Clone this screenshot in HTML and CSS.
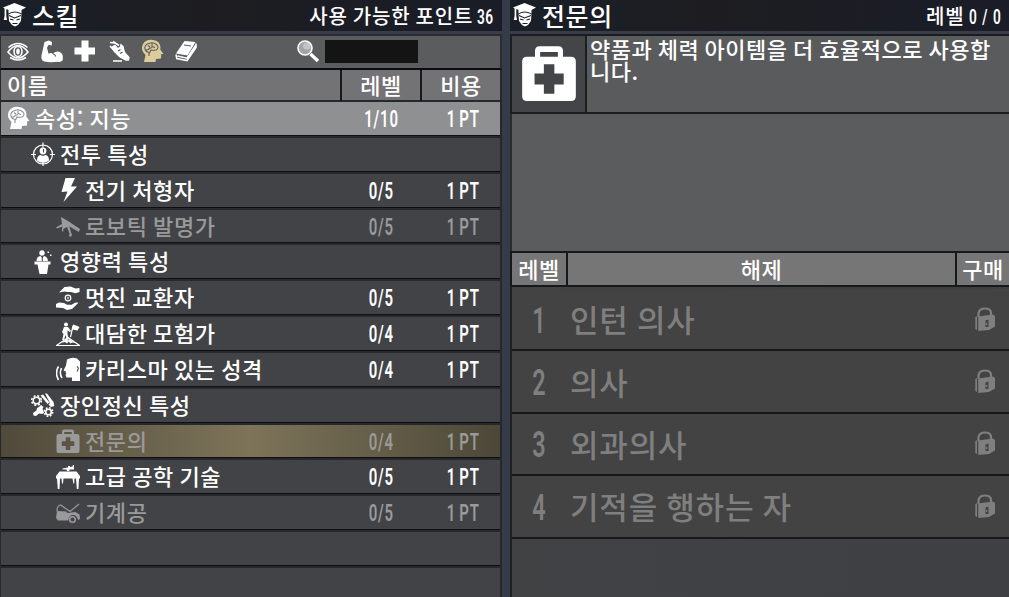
FILE: index.html
```
<!DOCTYPE html>
<html lang="ko">
<head>
    <meta charset="UTF-8">
    <meta name="viewport" content="width=device-width, initial-scale=1.0">
    <title>스킬</title>
    <link rel="stylesheet" href="styles.css">
</head>
<body>
    <!-- Icon sprites -->
    <svg class="sprites" width="0" height="0">
        <symbol id="grad" viewBox="0 0 24 24">
            <path d="M0 4.5 11.500 0 23 4.500 18.500 7v3.500Q11.500 6.500 5.500 10.500V7L3.300 6V13l.7 4H.8l.8-4V5.500z"/>
            <path d="M5.500 11.500q6-4 13 0l-.6 6.500-2.900 4-3 1.500-3-1.500-3-4z"/>
            <path class="cut" d="M6 12.500l5.500 2.500 6.500-2.500M7 16l3.500 1M13.500 17l3.500-1M9.500 20.500h5"/>
        </symbol>
        <symbol id="eye" viewBox="0 0 24 24">
            <path class="line" d="M2 13q10-13 20 0-10 12-20 0z"/>
            <path class="line" d="M2.500 8.500q9.500-8 19 0M4 18.500q8 5 16 0" stroke-width="1.200"/>
            <ellipse class="line" cx="12" cy="12.500" rx="4" ry="5"/>
            <ellipse cx="12" cy="12.500" rx="1.800" ry="3"/>
        </symbol>
        <symbol id="arm" viewBox="0 0 24 24">
            <path d="M4.500 3 9 1.500l3 1.500-.3 3.500-3-.7-1.700 3 1.500 6q2.500-1.500 4.500.2 1.500-2.800 5-2.500 4 .5 4.800 4.500v4q-2 2.500-5 1.800-8 1-13.500-.3-3.500-1-2.800-6z"/>
            <path class="cut" d="M13.200 15q2 .5 2.500 2.500"/>
        </symbol>
        <symbol id="plus" viewBox="0 0 24 24">
            <path d="M8.500 1.500h7v7h6.500v7h-6.500v7h-7v-7H1.500v-7h7z"/>
        </symbol>
        <symbol id="shoe" viewBox="0 0 24 24">
            <path d="M4 8 8 5.500l3 3.500 2-1.500.5-3 3 2.500 1.500 6 4.500 5v2.500l-4.500.5-5.500-3-5.500-5z"/>
            <path class="line" d="M3 3.500l5 .5M3 7l5 5.500 5 5 6 3.500h3M6 2.500l6 4M6 22h9" stroke-width="1.200"/>
            <path class="cut" d="M11 12l2.500-1.500M13 14.500l2.500-1.500"/>
        </symbol>
        <symbol id="brain" viewBox="0 0 24 24">
            <path d="M4 23l1.500-7Q0 11 3 5 6.500 0 13 1q7 1 7.500 7l-.2 2.500L23.500 15h-2.200l-.3 4.500-5 .5-.5 3z"/>
            <path class="cut" d="M5 10.500Q4 5.500 9 4.500q4-2 8 1.500 2.500 3-1 5-3 .5-5 0l-1.500 3M5 10.500q3 1.500 4-1l3-1M8 6.500l2 1.500M12 4.500v3l3 1M5 10.500q1 2.500 4 3V17" stroke-width="1.300"/>
        </symbol>
        <symbol id="book" viewBox="0 0 24 24">
            <path d="M10.500 2 21.500 3 13.500 16.500 2 14.500z"/>
            <path class="line" d="M2 15.500l.8 4 10.200 2L22 8.500V4.500M3.500 17l9.500 2.200L21.500 6.500" stroke-width="1.300"/>
            <path class="cut" d="M10 6l7 1"/>
        </symbol>
        <symbol id="aim" viewBox="0 0 24 24">
            <circle class="line thin" cx="12" cy="12.500" r="9.500"/>
            <path class="line thin" d="M12 .5v5M12 19.500v5M0 12.500h5M19 12.500h5"/>
            <circle cx="12" cy="9" r="3.400"/>
            <path d="M6 18.500q0-5 3.500-5.500l2.500 1 2.500-1q3.500.5 3.500 5.500-6 4.500-12 0z"/>
            <path class="cut" d="M12.500 7v3.500"/>
        </symbol>
        <symbol id="bolt" viewBox="0 0 24 24">
            <path d="M9.500 0h9.500l-4 8.500h6L7.500 24l4-10.500-6 .5z"/>
        </symbol>
        <symbol id="turret" viewBox="0 0 24 24">
            <path d="M5 3l7 4 12 8-1.200 3L13.500 12.500l1.500 6 1 2-1 2.500-2-1 .5-2.500L11 13l-3.500 2-.5 3.500L5.800 16l.7-3.500L1 14.500l-1-1L6 10z"/>
        </symbol>
        <symbol id="podium" viewBox="0 0 24 24">
            <circle cx="11" cy="3" r="2.700"/>
            <path d="M5.500 11q0-4.500 4-5l1.800 2 1.700-2q3.500.5 4 5zM3.500 11.500h16v3h-2L16 24H8.500L6.500 14.500h-3z"/>
            <path class="cut" d="M11.300 7v4"/>
            <path d="M16.500 1.500H18V3h-1.500zM19 4.500h1.500V6H19z"/>
        </symbol>
        <symbol id="trade" viewBox="0 0 24 24">
            <path d="M3 6.500 8.500 1l6-.5 5 2 4-.5v4l-4 1.300-4.500-1.300-3.500 0-3-.5zM0 18l3-1.500 5 .5 3 1.800h4.500l4-2.300 3 .3-6.500 6.200-5 1-4-2-7-.5z"/>
            <circle class="line thin" cx="12" cy="12" r="2.800"/>
            <path d="M11.400 10.800h1.200v2.400h-1.200z"/>
        </symbol>
        <symbol id="climber" viewBox="0 0 24 24">
            <circle cx="10" cy="2.500" r="2"/>
            <path d="M8 5h4l3 4-1 1-2.500-1.500v4l1.500 5h-2L9.500 13 8 18H6.200l1.300-6L6 10z"/>
            <path class="line thin" d="M14.500 15 17 4"/>
            <path d="M17 2.500l3 1 3.500 1.500-2 3.500-5.500-1z"/>
            <path class="line thin" d="M.5 23.500 12 15.500l11.500 8z"/>
            <path d="M5 21l6-4.500 1 2 1.500-1.500 5.500 4-3-.5-1.500 1-2-2-1.500 2-2-1.500z"/>
        </symbol>
        <symbol id="voice" viewBox="0 0 24 24">
            <path d="M11 2.500Q16-.5 21 1.500l3 3V24h-8v-3.500h-5.500l-1-2.500 1-1.500-1-.5.5-1.500-2.500-1L10 8.500z"/>
            <path class="line" d="M5.500 11q-2.500 5.500.5 10M2.500 9.500Q-1.500 16 2.500 23"/>
            <path class="cut" d="M21 9.500q2.500 1.500 0 5"/>
        </symbol>
        <symbol id="craft" viewBox="0 0 24 24">
            <circle class="line" cx="5.500" cy="7.500" r="3.300"/>
            <circle class="line" cx="5.500" cy="7.500" r="4.800" stroke-dasharray="2 1.800"/>
            <circle class="line" cx="17.500" cy="19" r="2.800"/>
            <circle class="line" cx="17.500" cy="19" r="4.200" stroke-dasharray="1.800 1.500"/>
            <path d="M9.500 2.500 12 1.500l6.500 8-2 1.500zM14 .5h2L22.500 9l.8 4-3.300 1-2.500-2.500L19 10zM10 12l2.500 2-1 1.500 1.500 4-1.500 1.500-3.500-.5-3 2.500-2.500-.5-.5-2.500 3.500-2.500.5-2.500 2-1z"/>
        </symbol>
        <symbol id="medkit" viewBox="0 0 24 24">
            <path fill-rule="evenodd" d="M2.500 5H6V2.500Q6 .5 8 .5h8q2 0 2 2V5h3.500q2 0 2 2v15q0 2-2 2h-19q-2 0-2-2V7q0-2 2-2zM8.200 5h7.600V3H8.200zM9.800 8.200v4H5.800v4.700h4v4h4.500v-4h4v-4.700h-4v-4z"/>
        </symbol>
        <symbol id="bench" viewBox="0 0 24 24">
            <path d="M3.500 6.500h17L24 11v2.500h-1l-.5 10.500h-1.700L20 13.500h-1.500l-.3 5h-.9l-.8-5h-9l-.5 5H6l-.5-5H4L3.500 24H1.800L1 13.500H0V11zM6.500 3.500 12 2.500V1h2v1l2.500-.5L17 0h1v4.500h-4L13 6h-2L10.500 4.500h-4z"/>
        </symbol>
        <symbol id="car" viewBox="0 0 24 24">
            <path d="M1 10l9 .5 1.500 1.500 8-1 4 2.500.5 4.500-2 1q-1-5-5-5t-4.800 5.500H2L0 17z"/>
            <path class="line thin" d="M1 10.500q0-6 3.500-6.500l9.500 6.500L23 3"/>
            <circle class="line" cx="16.500" cy="18.500" r="2.800"/>
        </symbol>
        <symbol id="glass" viewBox="0 0 24 24">
            <path class="line handle" d="M14.500 15 22 22"/>
            <circle cx="9" cy="9" r="6.500" fill="#a4a4a4"/>
            <ellipse cx="11" cy="7" rx="4" ry="3.500" fill="#c4c4c4"/>
            <circle class="line" cx="9" cy="9" r="7"/>
        </symbol>
        <symbol id="lock" viewBox="0 0 24 24">
            <path class="line shackle" d="M5.500 10V6Q6.500 1.500 12 1.500T18 5.500V9"/>
            <path d="M5.200 9.500 20 7.500l2 1.500v10.500l-6 3.500-10.800 1zM2.300 10l1.700-.8V23l-1.700-1z"/>
            <path class="hole" d="M12.500 13.500l3-1V20h-3z"/>
            <path d="M13 16h1.300v2H13z"/>
        </symbol>
    </svg>

    <div class="screen">
        <section class="window skills">
            <header class="title-bar">
                <svg class="icon"><use href="#grad"/></svg>
                <h1>스킬</h1>
                <div class="points">사용 가능한 포인트 <span class="num">36</span></div>
            </header>

            <div class="toolbar">
                <svg class="icon"><use href="#eye"/></svg>
                <svg class="icon"><use href="#arm"/></svg>
                <svg class="icon"><use href="#plus"/></svg>
                <svg class="icon"><use href="#shoe"/></svg>
                <svg class="icon active"><use href="#brain"/></svg>
                <svg class="icon"><use href="#book"/></svg>
                <div class="search">
                    <svg class="icon"><use href="#glass"/></svg>
                    <div class="search-input"></div>
                </div>
            </div>

            <div class="row list-head">
                <div class="name">이름</div>
                <div class="level">레벨</div>
                <div class="cost">비용</div>
            </div>

            <div class="list">
                <div class="row attribute">
                    <div class="name"><svg class="icon"><use href="#brain"/></svg>속성: 지능</div>
                    <div class="level"><span class="num">1/10</span></div>
                    <div class="cost"><span class="num">1 PT</span></div>
                </div>
                <div class="row group">
                    <div class="name"><svg class="icon"><use href="#aim"/></svg>전투 특성</div>
                </div>
                <div class="row perk">
                    <div class="name"><svg class="icon"><use href="#bolt"/></svg>전기 처형자</div>
                    <div class="level"><span class="num">0/5</span></div>
                    <div class="cost"><span class="num">1 PT</span></div>
                </div>
                <div class="row perk locked">
                    <div class="name"><svg class="icon"><use href="#turret"/></svg>로보틱 발명가</div>
                    <div class="level"><span class="num">0/5</span></div>
                    <div class="cost"><span class="num">1 PT</span></div>
                </div>
                <div class="row group">
                    <div class="name"><svg class="icon"><use href="#podium"/></svg>영향력 특성</div>
                </div>
                <div class="row perk">
                    <div class="name"><svg class="icon"><use href="#trade"/></svg>멋진 교환자</div>
                    <div class="level"><span class="num">0/5</span></div>
                    <div class="cost"><span class="num">1 PT</span></div>
                </div>
                <div class="row perk">
                    <div class="name"><svg class="icon"><use href="#climber"/></svg>대담한 모험가</div>
                    <div class="level"><span class="num">0/4</span></div>
                    <div class="cost"><span class="num">1 PT</span></div>
                </div>
                <div class="row perk">
                    <div class="name"><svg class="icon"><use href="#voice"/></svg>카리스마 있는 성격</div>
                    <div class="level"><span class="num">0/4</span></div>
                    <div class="cost"><span class="num">1 PT</span></div>
                </div>
                <div class="row group">
                    <div class="name"><svg class="icon"><use href="#craft"/></svg>장인정신 특성</div>
                </div>
                <div class="row perk locked selected">
                    <div class="name"><svg class="icon"><use href="#medkit"/></svg>전문의</div>
                    <div class="level"><span class="num">0/4</span></div>
                    <div class="cost"><span class="num">1 PT</span></div>
                </div>
                <div class="row perk">
                    <div class="name"><svg class="icon"><use href="#bench"/></svg>고급 공학 기술</div>
                    <div class="level"><span class="num">0/5</span></div>
                    <div class="cost"><span class="num">1 PT</span></div>
                </div>
                <div class="row perk locked">
                    <div class="name"><svg class="icon"><use href="#car"/></svg>기계공</div>
                    <div class="level"><span class="num">0/5</span></div>
                    <div class="cost"><span class="num">1 PT</span></div>
                </div>
                <div class="row"></div>
                <div class="row"></div>
            </div>
        </section>

        <section class="window details">
            <header class="title-bar">
                <svg class="icon"><use href="#grad"/></svg>
                <h1>전문의</h1>
                <div class="points">레벨 <span class="num wide">0 / 0</span></div>
            </header>

            <div class="summary">
                <div class="summary-icon"><svg class="icon"><use href="#medkit"/></svg></div>
                <p>약품과 체력 아이템을 더 효율적으로 사용합<br>니다.</p>
            </div>
            <div class="notes"></div>

            <div class="unlock-head">
                <div>레벨</div>
                <div>해제</div>
                <div>구매</div>
            </div>
            <div class="unlocks">
                <div class="unlock">
                    <span class="num">1</span>
                    <span class="unlock-name">인턴 의사</span>
                    <svg class="icon"><use href="#lock"/></svg>
                </div>
                <div class="unlock">
                    <span class="num">2</span>
                    <span class="unlock-name">의사</span>
                    <svg class="icon"><use href="#lock"/></svg>
                </div>
                <div class="unlock">
                    <span class="num">3</span>
                    <span class="unlock-name">외과의사</span>
                    <svg class="icon"><use href="#lock"/></svg>
                </div>
                <div class="unlock">
                    <span class="num">4</span>
                    <span class="unlock-name">기적을 행하는 자</span>
                    <svg class="icon"><use href="#lock"/></svg>
                </div>
            </div>
        </section>
    </div>
</body>
</html>
```

FILE: styles.css
```
* {
    box-sizing: border-box;
}

body {
    margin: 0;
    background: #353b48;
    color: #fff;
    font-family: "Noto Sans CJK KR", sans-serif;
    font-size: 22px;
    font-weight: 500;
    letter-spacing: 0.6px;
    word-spacing: -1.2px;
    line-height: 30px;
    white-space: nowrap;
    overflow: hidden;
}

.sprites {
    display: block;
}

.screen {
    display: flex;
    gap: 8px;
    height: 597px;
    overflow: hidden;
}

.window {
    display: flex;
    flex-direction: column;
    flex: none;
}

.window > * {
    flex-shrink: 0;
}

.skills {
    width: 502px;
}

.details {
    width: 499px;
}

/* Icons */
.icon {
    --cut: #444548;
    flex: none;
    width: 24px;
    height: 24px;
    fill: currentColor;
    overflow: visible;
}

.line {
    fill: none;
    stroke: currentColor;
    stroke-width: 1.6;
}

.thin {
    stroke-width: 1.2;
}

.handle {
    stroke-width: 3.4;
}

.shackle {
    stroke-width: 2.2;
}

.cut {
    fill: none;
    stroke: var(--cut);
    stroke-width: 1.1;
}

.hole {
    fill: #434343;
}

/* Condensed numerals */
.num {
    display: inline-block;
    font-family: Roboto, sans-serif;
    font-size: 23px;
    font-weight: 600;
    letter-spacing: 1.2px;
    word-spacing: -2px;
    transform: scaleX(0.65);
}

/* Title bars */
.title-bar {
    display: flex;
    align-items: center;
    height: 34px;
    padding: 0 8px 2px 3px;
    background: linear-gradient(90deg, #1a1f28, #1d1d21 40%, #1a1d28);
    border-bottom: 3px solid #373d49;
}

.title-bar .icon {
    --cut: #1b1e26;
}

.title-bar h1 {
    margin: 0 0 0 5px;
    font-size: 25px;
    font-weight: 500;
    line-height: 38px;
}

.points {
    margin-left: auto;
    padding-top: 3px;
    font-size: 20px;
    letter-spacing: 0.8px;
}

.points .num {
    margin-left: -1px;
    margin-right: -9px;
    font-size: 21px;
    letter-spacing: 0.8px;
    transform-origin: left;
}

.points .num.wide {
    margin-right: -18px;
    word-spacing: 0;
    letter-spacing: 1.6px;
}

/* Toolbar */
.toolbar {
    display: flex;
    align-items: center;
    gap: 9.5px;
    height: 36px;
    padding: 0 82px 2px 5px;
    background: #5b5c5d;
    border: solid #2b2c2f;
    border-width: 2px 2px 2px 1px;
    border-bottom-color: #0b0c0f;
}

.toolbar .icon {
    --cut: #5b5c5d;
}

.toolbar .active {
    color: #dccb9b;
}

.search {
    display: flex;
    align-items: center;
    gap: 5px;
    margin-left: auto;
}

.search-input {
    width: 93px;
    height: 23px;
    background: #141414;
}

/* Skill list */
.row {
    display: grid;
    grid-template-columns: 339px 82px 78px;
    align-items: center;
    height: 35.85px;
    background: #424346;
    border: 1px solid #27282b;
    border-width: 1px 2px 1px 1px;
    box-shadow: inset 0 -1px #0e0f11;
}

.name {
    display: flex;
    align-items: center;
    padding-bottom: 6px;
}

.name .icon {
    margin-top: 3px;
}

.level,
.cost {
    text-align: center;
}

.list .level,
.list .cost {
    padding-bottom: 3px;
}

.list .cost {
    padding-left: 4px;
}

.list-head {
    height: 31px;
    background: #737375;
    border-width: 0 2px 1px 1px;
    box-shadow: none;
    align-items: stretch;
    line-height: 29px;
}

.list-head .name {
    padding: 0 0 2px 6px;
}

.list-head .level {
    border: solid #18191b;
    border-width: 0 2px;
}

.attribute {
    background: #8f9091;
}

.attribute .icon {
    --cut: #8f9091;
    margin: 1px 5px 0;
}

.group .icon {
    margin-left: 30px;
    margin-right: 5px;
}

.perk .icon {
    margin-left: 55px;
    margin-right: 5px;
}

.locked {
    color: #9a9a9a;
}

.selected {
    background: linear-gradient(90deg, #504a3b, #7d7459 50%, #4c4738);
}

/* Details panel */
.summary {
    display: flex;
    height: 80px;
    background: #5a5b5d;
    border: 2px solid #1c1d1f;
    border-right: 0;
}

.summary-icon {
    display: flex;
    align-items: center;
    justify-content: center;
    width: 75px;
    padding: 0 0 3px 0;
    background: #444548;
    border-right: 2px solid #1c1d1f;
}

.summary-icon .icon {
    width: 56px;
    height: 56px;
}

.summary p {
    margin: 1px 0 0 3px;
    line-height: 22px;
    letter-spacing: 0.5px;
}

.notes {
    height: 137px;
    background: #5b5c5e;
    border-left: 2px solid #2b2c2f;
}

.unlock-head {
    display: grid;
    grid-template-columns: 54px 389px 54px;
    height: 36px;
    background: #767676;
    border: 2px solid #17181a;
    border-right: 0;
    text-align: center;
    line-height: 30px;
}

.unlock-head div + div {
    border-left: 2px solid #17181a;
}

.unlocks {
    flex: 1;
    padding-top: 2px;
    background: linear-gradient(90deg, #414244, #3e4044);
    border-left: 2px solid #1f2022;
}

.unlock {
    display: flex;
    align-items: center;
    height: 62.4px;
    padding-right: 12px;
    background: #434343;
    border-bottom: 2px solid #18181a;
    color: #7f7f7f;
}

.unlock .icon {
    margin-bottom: 1px;
}

.unlock .num {
    width: 54px;
    padding-top: 3px;
    font-size: 36px;
    letter-spacing: 0;
    text-align: center;
}

.unlock-name {
    flex: 1;
    padding-left: 4px;
    font-size: 31px;
    letter-spacing: 0.8px;
}
```
